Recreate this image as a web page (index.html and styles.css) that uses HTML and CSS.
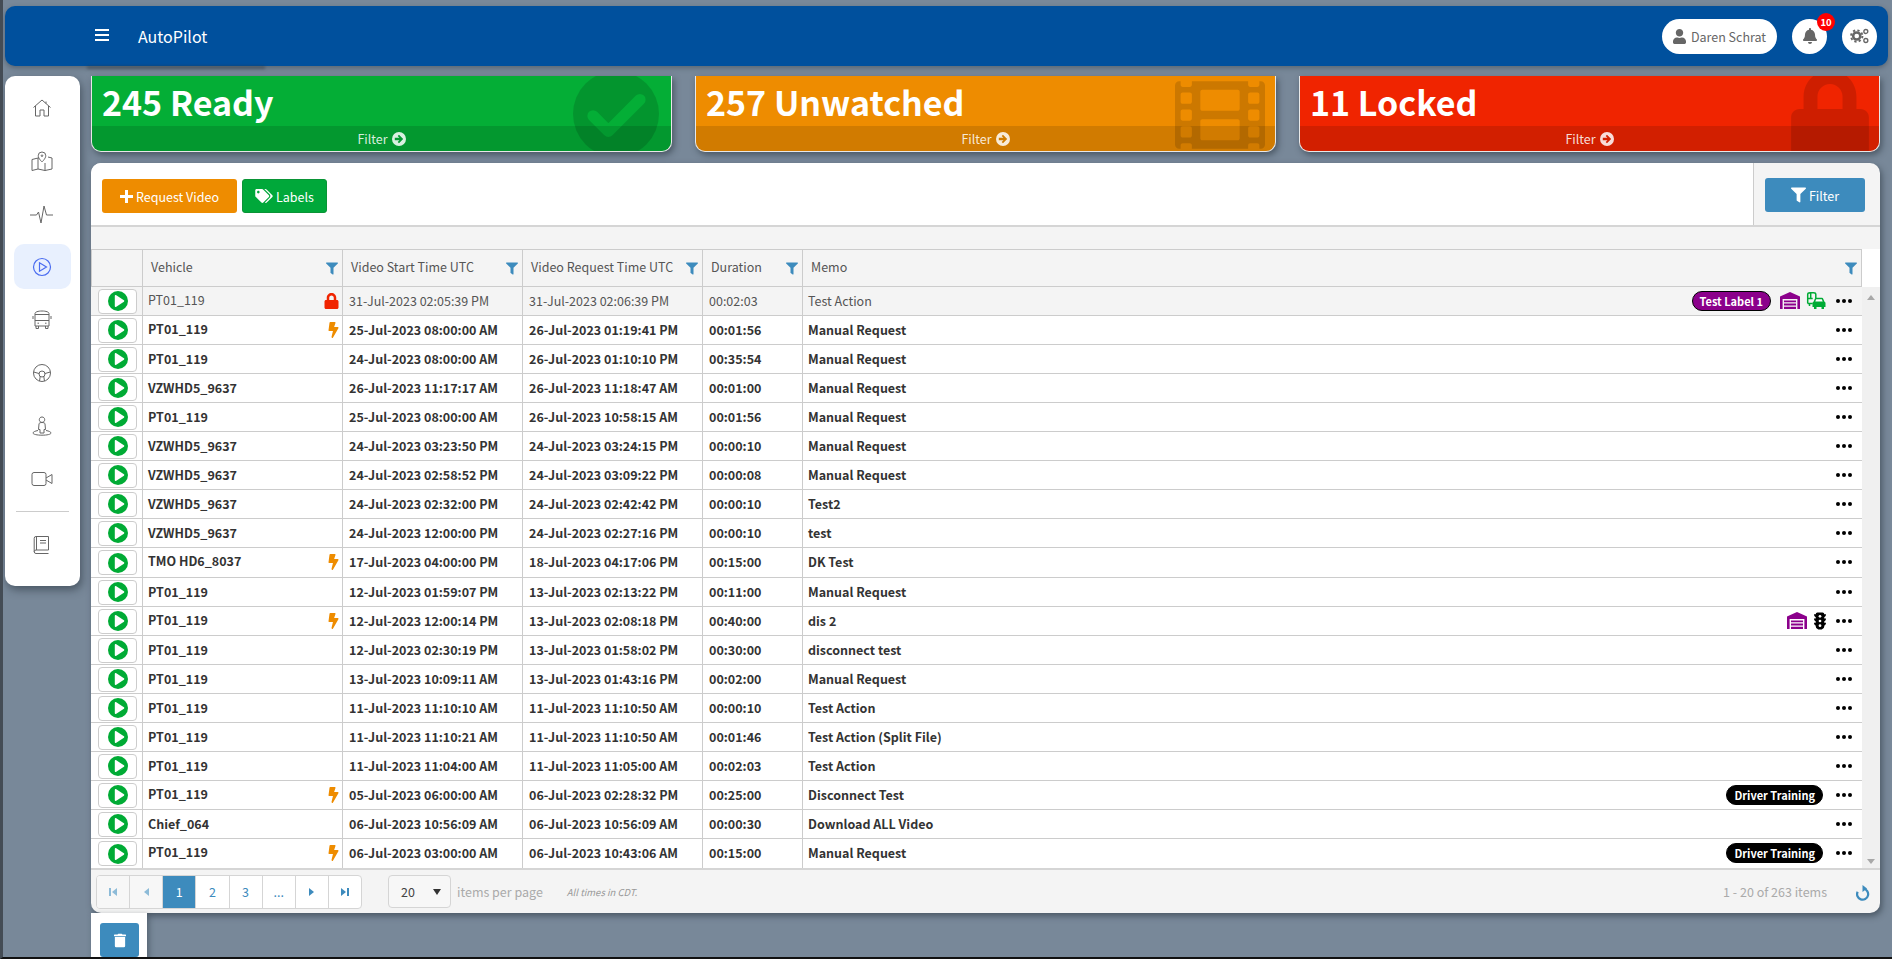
FILE: index.html
```html
<!DOCTYPE html>
<html lang="en">
<head>
    <meta charset="UTF-8">
    <title>AutoPilot</title>
    <link rel="stylesheet" href="styles.css">
</head>
<body>
    <svg class="sprites" xmlns="http://www.w3.org/2000/svg">
        <symbol id="i-filter" viewBox="0 0 512 512"><path d="M487.976 0H24.028C2.71 0-8.047 25.866 7.058 40.971L192 225.941V432c0 7.831 3.821 15.17 10.237 19.662l80 55.98C298.02 518.69 320 507.493 320 487.98V225.941l184.947-184.97C520.021 25.896 509.338 0 487.976 0z"/></symbol>
        <symbol id="i-bolt" viewBox="0 0 320 512"><path d="M296 160H180.6l42.6-129.8C227.2 15 215.7 0 200 0H56C44 0 33.8 8.9 32.2 20.8l-32 240C-1.7 275.2 9.5 288 24 288h118.7L96.6 482.5c-3.6 15.2 8 29.5 23.3 29.5 8.4 0 16.4-4.4 20.8-12l176-304c9.3-15.9-2.2-36-20.7-36z"/></symbol>
        <symbol id="i-lock" viewBox="0 0 448 512"><path d="M400 224h-24v-72C376 68.2 307.8 0 224 0S72 68.2 72 152v72H48c-26.5 0-48 21.5-48 48v192c0 26.5 21.5 48 48 48h352c26.5 0 48-21.5 48-48V272c0-26.5-21.5-48-48-48zm-104 0H152v-72c0-39.7 32.3-72 72-72s72 32.3 72 72v72z"/></symbol>
        <symbol id="i-play" viewBox="0 0 20 20"><circle cx="10" cy="10" r="10" fill="#00ab35"/><path d="M6.8 4.8c0-.6.6-1 1.100-.7l8 5.200c.5.3.5 1.100 0 1.400l-8 5.200c-.5.3-1.100-.1-1.100-.7z" fill="#fff"/></symbol>
        <symbol id="i-arrow" viewBox="0 0 16 16"><circle cx="8" cy="8" r="8" fill="currentColor"/><path d="M3.200 6.700h5.300L6.500 4.700l1.500-1.500L12.800 8 8 12.800l-1.500-1.500 2-2H3.200z" fill="var(--arrow-fill)"/></symbol>
        <symbol id="i-garage" viewBox="0 0 20 17"><path d="M0 17V4.500L10 0l10 4.500V17h-2.600V7H2.600v10zM4 8.500h12v1.800H4zM4 11.600h12v1.800H4zM4 14.700h12V17H4z"/></symbol>
        <symbol id="i-light" viewBox="0 0 14 20"><path d="M4 0h6a2 2 0 0 1 2 2h2c0 1.800-.8 2.800-2 3.200V7h2c0 1.800-.8 2.800-2 3.200V12h2c0 1.800-.8 2.800-2 3.200V16a4 4 0 0 1-3 3.900V20H5v-.1A4 4 0 0 1 2 16v-.8C.8 14.800 0 13.800 0 12h2v-1.800C.8 9.800 0 8.800 0 7h2V5.200C.8 4.800 0 3.800 0 2h2a2 2 0 0 1 2-2z"/><circle cx="7" cy="4.500" r="1.600" fill="#fff"/><circle cx="7" cy="10" r="1.600" fill="#fff"/><circle cx="7" cy="15.500" r="1.600" fill="#fff"/></symbol>
        <symbol id="i-fleet" viewBox="0 0 20 17">
            <path d="M1.700 11.500V2.500C1.700 1.500 2.700.8 4 .8h3.500C8.800.8 9.800 1.500 9.800 2.500V6M1.700 6.500h5M4.700 1v5.500M1.700 11.500h5M3.500 11.500v2.500" fill="none" stroke="#00ab35" stroke-width="1.500"/>
            <path d="M6.500 15V11.200c0-.7.400-1.300 1-1.500l1.300-2.900C9 6.200 9.700 5.800 10.400 5.800h5.200c.7 0 1.400.4 1.600 1l1.300 2.900c.6.2 1 .8 1 1.500V15h-1.500v2h-2.500v-2h-5v2H8v-2z" fill="#00ab35"/>
            <path d="M9.300 9.500l.9-2.200h5.600l.9 2.200z" fill="#fff"/>
        </symbol>
        <symbol id="i-dots" viewBox="0 0 16 4"><circle cx="2" cy="2" r="2"/><circle cx="8" cy="2" r="2"/><circle cx="14" cy="2" r="2"/></symbol>
    </svg>

    <header class="topbar">
        <div class="burger"><span></span><span></span><span></span></div>
        <div class="brand">AutoPilot</div>
        <div class="top-actions">
            <div class="pill">
                <svg class="pill-icon" viewBox="0 0 448 512"><path d="M224 256c70.700 0 128-57.300 128-128S294.700 0 224 0 96 57.300 96 128s57.300 128 128 128zm89.600 32h-16.700c-22.200 10.200-46.900 16-72.900 16s-50.600-5.800-72.900-16h-16.700C60.200 288 0 348.200 0 422.400V464c0 26.500 21.500 48 48 48h352c26.500 0 48-21.500 48-48v-41.600c0-74.200-60.200-134.400-134.400-134.400z"/></svg>
                Daren Schrat
            </div>
            <div class="round-btn">
                <svg class="bell" viewBox="0 0 448 512"><path d="M224 512c35.300 0 64-28.700 64-64H160c0 35.300 28.700 64 64 64zm215.400-149.700c-19.300-20.800-55.500-52-55.500-154.300 0-77.700-54.500-139.900-127.900-155.200V32c0-17.700-14.300-32-32-32s-32 14.300-32 32v20.800C118.600 68.100 64.100 130.300 64.100 208c0 102.300-36.200 133.500-55.500 154.300-6 6.400-8.700 14.100-8.600 21.700.1 16.400 13 32 32.100 32h383.800c19.100 0 32-15.600 32.100-32 .1-7.600-2.600-15.300-8.600-21.700z"/></svg>
                <span class="badge">10</span>
            </div>
            <div class="round-btn">
                <svg class="cogs" viewBox="0 0 24 20" fill="none" stroke="#666">
                    <circle cx="8.500" cy="10" r="4.500" stroke-width="3.200"/>
                    <circle cx="8.500" cy="10" r="7.200" stroke-width="2.400" stroke-dasharray="2.800 2.850"/>
                    <circle cx="20" cy="4.300" r="2.500" stroke-width="1.700"/>
                    <circle cx="20" cy="15.700" r="2.500" stroke-width="1.700"/>
                </svg>
            </div>
        </div>
    </header>

    <div class="layout">
        <nav class="sidebar">
            <a class="nav-item"><svg width="20" height="20" viewBox="0 0 20 20"><path d="M1.500 9.500 10 2l8.500 7.500M3.500 8v10h4.500v-6h4v6h4.500V8M14 3.500v2"/></svg></a>
            <a class="nav-item"><svg width="22" height="20" viewBox="0 0 22 20"><path d="M1 8.500 7 7v11l-6 1.500zM7 18l7 1.500 7-1.500V7l-4-1M7 7l1-.3M14 12v7.500"/><path d="M11 1a3.800 3.800 0 0 1 3.800 3.800C14.800 7.300 11 11 11 11S7.200 7.300 7.200 4.800A3.800 3.800 0 0 1 11 1z"/><circle cx="11" cy="4.700" r=".8"/></svg></a>
            <a class="nav-item"><svg width="24" height="20" viewBox="0 0 24 20"><path d="M0 11h6.500l2-3 2.500 11 3-17 2.500 9h6.500"/></svg></a>
            <a class="nav-item active"><svg width="20" height="20" viewBox="0 0 20 20"><circle cx="10" cy="10" r="8.500"/><path d="M7.500 5.800v8.400L14.500 10z"/></svg></a>
            <a class="nav-item"><svg width="20" height="20" viewBox="0 0 20 20"><path d="M3 3.500C3 2 6 1 10 1s7 1 7 2.500V16H3zM3 10.500h14M3 4.500h14M1 6v3M19 6v3M4 16v2.500h2.500V16M13.500 16v2.500H16V16M5.500 13.200h1.500M13 13.200h1.500"/></svg></a>
            <a class="nav-item"><svg width="20" height="20" viewBox="0 0 20 20"><circle cx="10" cy="10" r="8.500"/><path d="M1.600 9 7 10.500M18.400 9 13 10.500M8.300 13 7.500 18M11.700 13l.8 5"/><circle cx="10" cy="11" r="3"/></svg></a>
            <a class="nav-item"><svg width="20" height="20" viewBox="0 0 20 20"><path d="M10 1c1.600 0 2.700 1.100 2.700 2.700S11.600 6.400 10 6.400 7.300 5.300 7.300 3.700 8.400 1 10 1zM7 8c0-1 1.200-1.500 3-1.500s3 .5 3 1.500l.5 5.500H12V17H8v-3.500H6.500zM6 14.500c-3 .5-5 1.500-5 2.500 0 1.300 4 2.200 9 2.200s9-.9 9-2.200c0-1-2-2-5-2.500"/></svg></a>
            <a class="nav-item"><svg width="22" height="20" viewBox="0 0 22 20"><rect x="1" y="3.500" width="14" height="13" rx="2"/><path d="m15 9 6-3.500v9L15 11"/></svg></a>
            <div class="nav-sep"></div>
            <a class="nav-item"><svg width="20" height="20" viewBox="0 0 20 20"><path d="M4 1.500h12.500V15H4a1.800 1.800 0 0 0-1.800 1.800A1.800 1.800 0 0 0 4 18.500h12.500M2.200 16.800V3.300A1.800 1.800 0 0 1 4 1.500M4.500 1.500V15M8 5.500h6M8 8h6"/></svg></a>
        </nav>

        <main class="content">
            <section class="cards">
                <a class="stat-card green">
                    <div class="stat-title">245 Ready</div>
                    <svg class="stat-icon check-bg" viewBox="0 0 90 90"><circle cx="45" cy="45" r="45"/><path d="M21 47l16 16 33-33" fill="none" stroke="#04ae36" stroke-width="12" stroke-linecap="round" stroke-linejoin="round"/></svg>
                    <div class="stat-foot">Filter <svg class="foot-arrow"><use href="#i-arrow"/></svg></div>
                </a>
                <a class="stat-card orange">
                    <div class="stat-title">257 Unwatched</div>
                    <svg class="stat-icon film-bg" viewBox="0 64 512 384"><path d="M488 64h-8v20c0 6.600-5.400 12-12 12h-40c-6.600 0-12-5.400-12-12V64H96v20c0 6.600-5.400 12-12 12H44c-6.600 0-12-5.400-12-12V64h-8C10.700 64 0 74.700 0 88v336c0 13.300 10.700 24 24 24h8v-20c0-6.600 5.400-12 12-12h40c6.600 0 12 5.400 12 12v20h320v-20c0-6.600 5.400-12 12-12h40c6.600 0 12 5.400 12 12v20h8c13.300 0 24-10.700 24-24V88c0-13.300-10.700-24-24-24zM96 372c0 6.600-5.400 12-12 12H44c-6.600 0-12-5.400-12-12v-40c0-6.600 5.400-12 12-12h40c6.600 0 12 5.400 12 12v40zm0-96c0 6.600-5.400 12-12 12H44c-6.600 0-12-5.400-12-12v-40c0-6.600 5.400-12 12-12h40c6.600 0 12 5.400 12 12v40zm0-96c0 6.600-5.400 12-12 12H44c-6.600 0-12-5.400-12-12v-40c0-6.600 5.400-12 12-12h40c6.600 0 12 5.400 12 12v40zm272 208c0 6.600-5.400 12-12 12H156c-6.600 0-12-5.400-12-12v-96c0-6.600 5.400-12 12-12h200c6.600 0 12 5.400 12 12v96zm0-168c0 6.600-5.400 12-12 12H156c-6.600 0-12-5.400-12-12v-96c0-6.600 5.400-12 12-12h200c6.600 0 12 5.400 12 12v96zm112 152c0 6.600-5.400 12-12 12h-40c-6.600 0-12-5.400-12-12v-40c0-6.600 5.400-12 12-12h40c6.600 0 12 5.400 12 12v40zm0-96c0 6.600-5.400 12-12 12h-40c-6.600 0-12-5.400-12-12v-40c0-6.600 5.400-12 12-12h40c6.600 0 12 5.400 12 12v40zm0-96c0 6.600-5.400 12-12 12h-40c-6.600 0-12-5.400-12-12v-40c0-6.600 5.400-12 12-12h40c6.600 0 12 5.400 12 12v40z"/></svg>
                    <div class="stat-foot">Filter <svg class="foot-arrow"><use href="#i-arrow"/></svg></div>
                </a>
                <a class="stat-card red">
                    <div class="stat-title">11 Locked</div>
                    <svg class="stat-icon lock-bg" viewBox="0 0 448 512"><use href="#i-lock"/></svg>
                    <div class="stat-foot">Filter <svg class="foot-arrow"><use href="#i-arrow"/></svg></div>
                </a>
            </section>

            <section class="panel">
                <div class="toolbar">
                    <div class="toolbar-left">
                        <button class="btn btn-orange"><span class="plus"></span>Request Video</button>
                        <button class="btn btn-green">
                            <svg class="tags" viewBox="0 0 640 512"><path d="M497.941 225.941L286.059 14.059A48 48 0 0 0 252.118 0H48C21.490 0 0 21.490 0 48v204.118a48 48 0 0 0 14.059 33.941l211.882 211.882c18.744 18.745 49.136 18.746 67.882 0l204.118-204.118c18.745-18.745 18.745-49.137 0-67.882zM112 160c-26.510 0-48-21.490-48-48s21.490-48 48-48 48 21.490 48 48-21.490 48-48 48zm513.941 133.823L421.823 497.941c-18.745 18.745-49.137 18.745-67.882 0l-.360-.360L527.640 323.522c16.999-16.999 26.360-39.600 26.360-63.640s-9.362-46.641-26.360-63.640L331.397 0h48.721a48 48 0 0 1 33.941 14.059l211.882 211.882c18.745 18.745 18.745 49.137 0 67.882z"/></svg>
                            Labels
                        </button>
                    </div>
                    <div class="toolbar-right">
                        <button class="btn btn-blue"><svg class="filter-white"><use href="#i-filter"/></svg>Filter</button>
                    </div>
                </div>
                <div class="group-strip"></div>

                <div class="grid-head">
                    <div class="th th-play"></div>
                    <div class="th th-vehicle"><span>Vehicle</span><svg class="th-filter"><use href="#i-filter"/></svg></div>
                    <div class="th th-start"><span>Video Start Time UTC</span><svg class="th-filter"><use href="#i-filter"/></svg></div>
                    <div class="th th-req"><span>Video Request Time UTC</span><svg class="th-filter"><use href="#i-filter"/></svg></div>
                    <div class="th th-dur"><span>Duration</span><svg class="th-filter"><use href="#i-filter"/></svg></div>
                    <div class="th th-memo"><span>Memo</span><svg class="th-filter"><use href="#i-filter"/></svg></div>
                </div>

                <div class="grid-body">
                    <table class="rows">
                        <colgroup><col class="c-play"><col class="c-vehicle"><col class="c-start"><col class="c-req"><col class="c-dur"><col></colgroup>
                        <tbody id="rows"></tbody>
                    </table>
                    <div class="scrollbar"><span class="arrow-up"></span><span class="arrow-down"></span></div>
                </div>

                <div class="pager">
                    <div class="pages">
                        <a class="page muted"><span class="bar"></span><span class="tri-left"></span></a>
                        <a class="page muted"><span class="tri-left"></span></a>
                        <a class="page current">1</a>
                        <a class="page">2</a>
                        <a class="page">3</a>
                        <a class="page">...</a>
                        <a class="page"><span class="tri-right"></span></a>
                        <a class="page"><span class="tri-right"></span><span class="bar"></span></a>
                    </div>
                    <div class="per-page">20<span class="caret"></span></div>
                    <span class="per-label">items per page</span>
                    <span class="tz-note">All times in CDT.</span>
                    <span class="pager-info">1 - 20 of 263 items</span>
                    <svg class="refresh" viewBox="0 0 16 17"><path d="M9 3.900A5.900 5.900 0 1 1 2.800 7.200" fill="none" stroke="#3d8bbd" stroke-width="2.400"/><path d="M8 0v7.500l4.800-3.800z" fill="#3d8bbd"/></svg>
                </div>
            </section>

            <div class="trash-wrap">
                <button class="trash-btn"><svg viewBox="0 0 448 512"><path d="M32 464a48 48 0 0 0 48 48h288a48 48 0 0 0 48-48V128H32zM432 32H312l-9.400-18.700A24 24 0 0 0 281.100 0H166.800a23.700 23.700 0 0 0-21.400 13.300L136 32H16A16 16 0 0 0 0 48v32a16 16 0 0 0 16 16h416a16 16 0 0 0 16-16V48a16 16 0 0 0-16-16z"/></svg></button>
            </div>
        </main>
    </div>

    <script src="rows.js"></script>
</body>
</html>
```

FILE: rows.js
```js
// vehicle, flag, start, request, duration, memo, extras
const videos = [
    ["PT01_119", "lock", "31-Jul-2023 02:05:39 PM", "31-Jul-2023 02:06:39 PM", "00:02:03", "Test Action", "first"],
    ["PT01_119", "bolt", "25-Jul-2023 08:00:00 AM", "26-Jul-2023 01:19:41 PM", "00:01:56", "Manual Request"],
    ["PT01_119", "", "24-Jul-2023 08:00:00 AM", "26-Jul-2023 01:10:10 PM", "00:35:54", "Manual Request"],
    ["VZWHD5_9637", "", "26-Jul-2023 11:17:17 AM", "26-Jul-2023 11:18:47 AM", "00:01:00", "Manual Request"],
    ["PT01_119", "", "25-Jul-2023 08:00:00 AM", "26-Jul-2023 10:58:15 AM", "00:01:56", "Manual Request"],
    ["VZWHD5_9637", "", "24-Jul-2023 03:23:50 PM", "24-Jul-2023 03:24:15 PM", "00:00:10", "Manual Request"],
    ["VZWHD5_9637", "", "24-Jul-2023 02:58:52 PM", "24-Jul-2023 03:09:22 PM", "00:00:08", "Manual Request"],
    ["VZWHD5_9637", "", "24-Jul-2023 02:32:00 PM", "24-Jul-2023 02:42:42 PM", "00:00:10", "Test2"],
    ["VZWHD5_9637", "", "24-Jul-2023 12:00:00 PM", "24-Jul-2023 02:27:16 PM", "00:00:10", "test"],
    ["TMO HD6_8037", "bolt", "17-Jul-2023 04:00:00 PM", "18-Jul-2023 04:17:06 PM", "00:15:00", "DK Test"],
    ["PT01_119", "", "12-Jul-2023 01:59:07 PM", "13-Jul-2023 02:13:22 PM", "00:11:00", "Manual Request"],
    ["PT01_119", "bolt", "12-Jul-2023 12:00:14 PM", "13-Jul-2023 02:08:18 PM", "00:40:00", "dis 2", "light"],
    ["PT01_119", "", "12-Jul-2023 02:30:19 PM", "13-Jul-2023 01:58:02 PM", "00:30:00", "disconnect test"],
    ["PT01_119", "", "13-Jul-2023 10:09:11 AM", "13-Jul-2023 01:43:16 PM", "00:02:00", "Manual Request"],
    ["PT01_119", "", "11-Jul-2023 11:10:10 AM", "11-Jul-2023 11:10:50 AM", "00:00:10", "Test Action"],
    ["PT01_119", "", "11-Jul-2023 11:10:21 AM", "11-Jul-2023 11:10:50 AM", "00:01:46", "Test Action (Split File)"],
    ["PT01_119", "", "11-Jul-2023 11:04:00 AM", "11-Jul-2023 11:05:00 AM", "00:02:03", "Test Action"],
    ["PT01_119", "bolt", "05-Jul-2023 06:00:00 AM", "06-Jul-2023 02:28:32 PM", "00:25:00", "Disconnect Test", "driver"],
    ["Chief_064", "", "06-Jul-2023 10:56:09 AM", "06-Jul-2023 10:56:09 AM", "00:00:30", "Download ALL Video"],
    ["PT01_119", "bolt", "06-Jul-2023 03:00:00 AM", "06-Jul-2023 10:43:06 AM", "00:15:00", "Manual Request", "driver"]
];

const extras = {
    first: '<span class="tag tag-purple">Test Label 1</span><svg class="ic-garage"><use href="#i-garage"/></svg><svg class="ic-fleet"><use href="#i-fleet"/></svg>',
    light: '<svg class="ic-garage"><use href="#i-garage"/></svg><svg class="ic-light"><use href="#i-light"/></svg>',
    driver: '<span class="tag tag-black">Driver Training</span>'
};

const flags = {
    lock: '<svg class="flag flag-lock"><use href="#i-lock"/></svg>',
    bolt: '<svg class="flag flag-bolt"><use href="#i-bolt"/></svg>'
};

document.getElementById("rows").innerHTML = videos.map(function(v, i) {
    let cls = "";
    if (i === 0) cls = "seen";
    if (i === 9) cls = "tall";
    return `<tr class="${cls}">
        <td class="td-play"><span class="play-btn"><svg><use href="#i-play"/></svg></span></td>
        <td><div class="veh ${v[1] ? "has-flag" : ""}"><span>${v[0]}</span>${flags[v[1]] || ""}</div></td>
        <td>${v[2]}</td>
        <td>${v[3]}</td>
        <td>${v[4]}</td>
        <td><div class="memo"><span class="memo-text">${v[5]}</span>${extras[v[6]] || ""}<svg class="dots"><use href="#i-dots"/></svg></div></td>
    </tr>`;
}).join("");
```

FILE: styles.css
```css
html, body { margin: 0; padding: 0; height: 100%; overflow: hidden; }
body {
    height: 959px;
    box-sizing: border-box;
    padding: 6px 4px 0 2px;
    background-color: #788899;
    border-left: 3px solid #444c55;
    border-bottom: 2px solid #111;
    font-family: "Noto Sans CJK SC", "Source Sans Pro", "Open Sans", sans-serif;
    font-size: 12.5px;
    color: #333;
}
button { font-family: inherit; }
.sprites { display: none; }

/* top bar */
.topbar {
    height: 60px;
    background-color: #00509d;
    border-radius: 10px;
    display: flex;
    align-items: center;
    color: #fff;
    position: relative;
    box-shadow: 0 2px 5px rgba(30, 40, 50, 0.35);
}
.topbar::after {
    content: "";
    position: absolute; left: 82px; top: 60px;
    width: 178px; height: 3px;
    background: rgba(40, 50, 60, 0.45);
    filter: blur(1.5px);
}
.burger { margin-left: 90px; width: 14px; display: flex; flex-direction: column; gap: 2.500px; margin-top: -2px; }
.burger span { height: 2.500px; background: #fff; }
.brand { margin-left: 29px; font-size: 16px; line-height: 24px; margin-top: -1px; }
.top-actions { margin-left: auto; margin-right: 11px; display: flex; gap: 15px; align-items: center; }
.pill {
    width: 115px; height: 35px; background: #fff; border-radius: 18px;
    display: flex; align-items: center; justify-content: center; gap: 5px;
    color: #666; font-size: 12.5px;
}
.pill-icon { width: 13px; height: 15px; fill: #666; }
.round-btn {
    width: 35px; height: 35px; background: #fff; border-radius: 50%;
    display: flex; align-items: center; justify-content: center; position: relative;
}
.bell { width: 14px; height: 16px; fill: #666; }
.cogs { width: 19px; height: 16px; }
.badge {
    position: absolute; top: -6px; right: -8px;
    width: 18px; height: 18px; border-radius: 50%;
    background: #f00; color: #fff; font-size: 9.5px; font-weight: 700;
    text-align: center; line-height: 18px;
}

/* page layout */
.layout { display: flex; margin-top: 10px; gap: 11px; }
.sidebar {
    width: 75px; height: 510px; flex: none;
    background: #fff; border-radius: 10px;
    box-shadow: 2px 4px 8px rgba(30, 40, 50, 0.5);
    box-sizing: border-box; padding-top: 9px;
    display: flex; flex-direction: column; align-items: center;
}
.nav-item {
    width: 57px; height: 45px; margin-bottom: 8px; flex: none;
    box-sizing: border-box; padding-right: 2px;
    border-radius: 10px;
    display: flex; align-items: center; justify-content: center;
}
.nav-item svg { fill: none; stroke: #666; stroke-width: 1; }
.nav-item.active { background: #e8f0fe; }
.nav-item.active svg { stroke: #4a6cf0; stroke-width: 1.200; }
.nav-sep { width: 53px; height: 1px; background: #ccc; margin: 2px 0 10px; flex: none; }

.content { width: 1789px; flex: none; }

/* stat cards */
.cards { display: flex; gap: 23px; }
.stat-card {
    flex: 1; height: 76px; box-sizing: border-box;
    position: relative; overflow: hidden;
    border: 1px solid #e8e8e8; border-top: 0;
    border-radius: 0 0 10px 10px;
    box-shadow: 2px 3px 6px rgba(30, 40, 50, 0.5);
    color: #fff;
}
.stat-card.green { background: #04ae36; }
.stat-card.orange { background: #ee8c00; }
.stat-card.red { background: #f02400; }
.stat-title {
    font-size: 34px; font-weight: 700; line-height: 44px;
    padding: 4px 0 0 10px;
}
.stat-foot {
    position: absolute; left: 0; right: 0; bottom: 0; height: 25px;
    background: rgba(0, 0, 0, 0.12);
    display: flex; align-items: center; justify-content: center; gap: 4px;
    font-size: 12.5px; color: rgba(255, 255, 255, 0.85);
}
.foot-arrow { width: 14px; height: 14px; color: rgba(255, 255, 255, 0.85); }
.green .foot-arrow { --arrow-fill: #049a30; }
.orange .foot-arrow { --arrow-fill: #d07c00; }
.red .foot-arrow { --arrow-fill: #d42000; }
.stat-icon { position: absolute; fill: rgba(0, 0, 0, 0.14); }
.check-bg { width: 86px; height: 86px; right: 12px; top: -5px; }
.film-bg { width: 90px; height: 68px; right: 10px; top: 5px; }
.lock-bg { width: 78px; height: 89px; right: 10px; top: -6px; }

/* panel */
.panel {
    margin-top: 11px; height: 750px;
    background: #f4f4f4;
    border-radius: 10px;
    box-shadow: 2px 3px 6px rgba(30, 40, 50, 0.5);
    overflow: hidden;
}
.toolbar { height: 62px; display: flex; border-bottom: 2px solid #d5d5d5; }
.toolbar-left { flex: 1; background: #fff; padding: 16px 11px; display: flex; gap: 5px; align-items: flex-start; }
.toolbar-right { width: 127px; border-left: 1px solid #ccc; padding: 15px 0 0 11px; box-sizing: border-box; }
.btn {
    height: 34px; box-sizing: border-box; border: 1px solid transparent; border-radius: 3px;
    color: #fff; font-size: 12.5px; display: flex; align-items: center; justify-content: center; padding: 0;
}
.btn-orange { width: 135px; background: #ee8c00; gap: 3px; }
.btn-green { width: 85px; background: #00a83a; border-color: #0a9436; gap: 3px; }
.btn-blue { width: 100px; background: #3d8bbd; gap: 3px; }
.plus {
    width: 13px; height: 13px; display: inline-block;
    background:
        linear-gradient(#fff, #fff) center / 100% 3px no-repeat,
        linear-gradient(#fff, #fff) center / 3px 100% no-repeat;
}
.tags { width: 18px; height: 14px; fill: #fff; }
.filter-white { width: 15px; height: 16px; fill: #fff; }
.group-strip { height: 22px; }

/* table */
.grid-head {
    display: flex; height: 38px; box-sizing: border-box; margin-right: 18px;
    border: 1px solid #ccc;
    background: #f4f4f4; color: #555;
    box-shadow: 18px 0 0 #fff;
}
.th {
    height: 100%; box-sizing: border-box; border-right: 1px solid #ccc;
    display: flex; align-items: center; padding-left: 8px; position: relative; line-height: 18px;
}
.th span { margin-top: -3px; }
.th-play { width: 51px; }
.th-vehicle { width: 200px; }
.th-start { width: 180px; }
.th-req { width: 180px; }
.th-dur { width: 100px; }
.th-memo { flex: 1; border-right: 0; }
.th-filter { position: absolute; right: 4px; top: 12px; width: 12px; height: 13px; fill: #3d8bbd; }

.grid-body { display: flex; height: 583px; background: #fff; border-bottom: 2px solid #d5d5d5; box-sizing: border-box; }
.rows { width: 1771px; height: 29px; flex: none; border-collapse: separate; border-spacing: 0; table-layout: fixed; font-weight: 700; }
.c-play { width: 52px; }
.c-vehicle { width: 200px; }
.c-start { width: 180px; }
.c-req { width: 180px; }
.c-dur { width: 100px; }
.rows td {
    height: 29px; box-sizing: border-box; padding: 0 0 1px 6px;
    border-bottom: 1px solid #ccc; border-right: 1px solid #ccc;
    white-space: nowrap; line-height: 18px; overflow: hidden;
}
.rows td:last-child { border-right: 0; padding-left: 5px; }
.rows td.td-play { padding: 0 0 0 7px; }
.rows tr:last-child td { border-bottom: 0; }
.rows tr.tall td { height: 30px; }
.rows tr.seen td { background: #f4f4f4; font-weight: 400; color: #555; }
.play-btn {
    width: 39px; height: 25px; box-sizing: border-box;
    border: 1px solid #ccc; border-radius: 4px; background: #fff;
    display: flex; align-items: center; justify-content: center;
}
.play-btn svg { width: 20px; height: 20px; }
.veh { display: flex; justify-content: space-between; align-items: center; margin-left: -1px; padding-right: 3px; height: 18px; }
.veh.has-flag span { margin-top: -2px; }
.flag { flex: none; }
.flag-lock { width: 15px; height: 16px; fill: #f02400; }
.flag-bolt { width: 11px; height: 16px; fill: #ee8c00; }
.memo { display: flex; align-items: center; height: 20px; }
.memo-text { margin-right: auto; }
.dots { width: 16px; height: 4px; fill: #000; margin: 0 10px 0 10px; flex: none; }
.tag {
    height: 20px; box-sizing: border-box; border-radius: 10px; color: #fff;
    font-size: 11px; font-weight: 700; line-height: 18px; padding: 0 7px;
    border: 1px solid #000;
}
.tag-purple { background: #8b008b; }
.tag-black { background: #000; margin-right: 3px; }
.ic-garage { width: 20px; height: 17px; fill: #8b008b; margin-left: 9px; }
.ic-fleet { width: 20px; height: 17px; margin-left: 6px; }
.ic-light { width: 12px; height: 18px; fill: #000; margin-left: 7px; }
.scrollbar { flex: 1; background: #f0f0f0; position: relative; }
.arrow-up, .arrow-down { position: absolute; left: 5px; width: 0; height: 0; border: 4px solid transparent; }
.arrow-up { top: 4px; border-bottom: 5px solid #a8a8a8; }
.arrow-down { bottom: 0; border-top: 5px solid #a8a8a8; }

/* pager */
.pager { height: 43px; display: flex; align-items: center; padding-left: 5px; padding-right: 10px; color: #aaa; }
.pages { display: flex; width: 266px; height: 34px; box-sizing: border-box; border: 1px solid #d5d5d5; border-radius: 4px; background: #fff; overflow: hidden; }
.page {
    flex: 1; height: 100%; box-sizing: border-box; border-right: 1px solid #d5d5d5;
    display: flex; align-items: center; justify-content: center; gap: 1px;
    color: #3d8bbd;
}
.page:last-child { border-right: 0; }
.page.muted { background: #f7f7f7; }
.page.current { background: #3d8bbd; color: #fff; }
.bar { width: 2px; height: 8px; background: #3d8bbd; }
.tri-left { width: 0; height: 0; border: 4px solid transparent; border-left: 0; border-right: 5px solid #3d8bbd; }
.tri-right { width: 0; height: 0; border: 4px solid transparent; border-right: 0; border-left: 5px solid #3d8bbd; }
.muted .bar { background: #8dbbd8; }
.muted .tri-left { border-right-color: #8dbbd8; }
.per-page {
    width: 63px; height: 33px; box-sizing: border-box; margin-left: 26px;
    border: 1px solid #d5d5d5; border-radius: 4px; background: #f7f7f7;
    display: flex; align-items: center; padding-left: 12px; color: #444;
    position: relative;
}
.caret { position: absolute; right: 9px; top: 13px; width: 0; height: 0; border: 4px solid transparent; border-bottom: 0; border-top: 6px solid #333; }
.per-label { margin-left: 6px; }
.tz-note { margin-left: 24px; font-size: 9.5px; font-style: italic; color: #999; }
.pager-info { margin-left: auto; }
.refresh { width: 15px; height: 16px; margin-left: 28px; margin-top: 3px; }

/* delete strip */
.trash-wrap { width: 56px; height: 46px; background: #fff; padding: 10px 0 0 9px; box-sizing: border-box; box-shadow: 2px 2px 6px rgba(30, 40, 50, 0.4); }
.trash-btn { width: 39px; height: 34px; padding: 0; background: #3d8bbd; border: 0; border-radius: 3px; display: flex; align-items: center; justify-content: center; }
.trash-btn svg { width: 12px; height: 15px; fill: #fff; }
```
